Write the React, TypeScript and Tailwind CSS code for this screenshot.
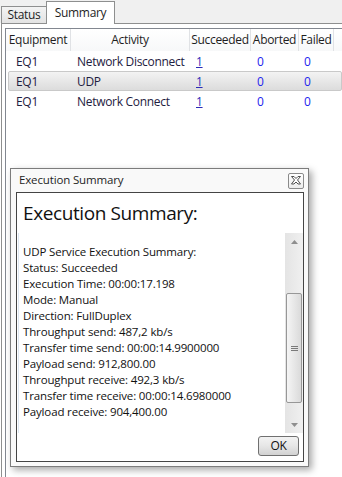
import React from "react";

const rows = [
  { eq: "EQ1", act: "Network Disconnect", sel: false },
  { eq: "EQ1", act: "UDP", sel: true },
  { eq: "EQ1", act: "Network Connect", sel: false },
];

const lines = [
  "UDP Service Execution Summary:",
  "Status: Succeeded",
  "Execution Time: 00:00:17.198",
  "Mode: Manual",
  "Direction: FullDuplex",
  "Throughput send: 487,2 kb/s",
  "Transfer time send: 00:00:14.9900000",
  "Payload send: 912,800.00",
  "Throughput receive: 492,3 kb/s",
  "Transfer time receive: 00:00:14.6980000",
  "Payload receive: 904,400.00",
];

export default function App() {
  return (
    <div className="relative h-[477px] w-[342px] overflow-hidden bg-white font-['Open_Sans',sans-serif] text-[12px] leading-[16px] tracking-[-0.3px] text-[#1e1e1e]">
      {/* Tab strip */}
      <div className="flex h-[23px] items-end bg-[#f0f0f0]">
        <div className="ml-[1px] flex h-[17px] w-[45px] items-center justify-center border-l border-t border-[#8e8f8f] bg-gradient-to-b from-[#f3f3f3] to-[#e3e3e3]">
          Status
        </div>
        <div className="relative z-10 -mb-px flex h-[23px] w-[69px] items-center justify-center border-x border-t border-[#8e8f8f] bg-white pb-[1px]">
          Summary
        </div>
      </div>

      {/* Tab content */}
      <div className="ml-[1px] h-[454px] border-l border-t border-[#8e8f8f] bg-white pl-[3px] pt-[4px]">
        <div className="h-full border-l border-t border-[#828790]">
          {/* header */}
          <div className="flex h-[22px] items-center bg-gradient-to-b from-white to-[#f7f8f9]">
            <div className="flex h-full w-[65px] items-center justify-center border-r border-[#e0e2e5]">Equipment</div>
            <div className="flex h-full w-[119px] items-center justify-center border-r border-[#e0e2e5]">Activity</div>
            <div className="flex h-full w-[61px] items-center justify-center border-r border-[#e0e2e5]">Succeeded</div>
            <div className="flex h-full w-[48px] items-center justify-center border-r border-[#e0e2e5]">Aborted</div>
            <div className="flex h-full w-[35px] items-center justify-center border-r border-[#e0e2e5]">Failed</div>
          </div>
          {/* rows */}
          <div className="flex flex-col">
            {rows.map((r, i) => (
              <div
                key={i}
                className={
                  r.sel
                    ? "ml-[2px] flex h-[20px] items-center rounded-[2px] border border-[#c9c9c9] bg-gradient-to-b from-[#f3f3f3] to-[#dcdcdc] pt-[1px] text-[#1e2040]"
                    : "ml-[2px] flex h-[20px] items-center border border-transparent pt-[1px] text-[#1e2040]"
                }
              >
                <div className="w-[62px] pl-[7px]">{r.eq}</div>
                <div className="w-[119px] whitespace-nowrap pl-[6px]">{r.act}</div>
                <div className="w-[61px] pl-[6px]">
                  <span className="text-[#2b2bb8] underline decoration-[#2b2bb8]">1</span>
                </div>
                <div className="w-[48px] pl-[6px] text-[#2424ee]">0</div>
                <div className="w-[35px] pl-[5px] text-[#2424ee]">0</div>
              </div>
            ))}
          </div>
        </div>
      </div>

      {/* Dialog window */}
      <div className="absolute left-[10px] top-[168px] flex h-[299px] w-[299px] flex-col border border-[#7c7c7c] bg-[#f9f9f9] shadow-[3px_3px_7px_rgba(0,0,0,0.35)]">
        <div className="flex h-[23px] items-center justify-between pl-[8px] pr-[4px]">
          <span className="pb-[1px] text-[11.5px] tracking-[-0.15px]">Execution Summary</span>
          <div className="flex h-[16px] w-[16px] items-center justify-center rounded-[2px] border border-[#8a8a8a] bg-gradient-to-b from-white to-[#ececec]">
            <svg width="12" height="11" viewBox="0 0 12 11">
              <polygon
                points="1.5,1.5 4,1.5 6,3.5 8,1.5 10.5,1.5 7.5,5 10.5,9 8,9 6,7 4,9 1.5,9 4.5,5"
                fill="#ffffff"
                stroke="#505050"
                strokeWidth="1"
                strokeLinejoin="miter"
              />
            </svg>
          </div>
        </div>
        <div className="ml-[5px] mr-[4px] flex h-[270px] w-[288px] flex-col border border-[#444444] bg-white">
          <div className="mt-[7px] h-[26px] pl-[6px] text-[19px] leading-[26px] tracking-[-0.4px] text-[#111]">Execution Summary:</div>
          <div className="ml-[1px] mt-[7px] flex h-[200px] border-l border-[#dde7f2]">
            <div className="flex-1 pl-[4px] pt-[11px] text-[11.5px] tracking-[-0.15px] text-[#111]">
              {lines.map((l, i) => (
                <div key={i} className="h-[16px] whitespace-nowrap">{l}</div>
              ))}
            </div>
            <div className="flex w-[18px] flex-col bg-gradient-to-r from-[#e4e4e4] to-[#f0f0f0]">
              <div className="flex h-[17px] items-center justify-center">
                <svg width="7" height="4" viewBox="0 0 7 4">
                  <polygon points="3.5,0 7,4 0,4" fill="#8e8e8e" />
                </svg>
              </div>
              <div className="h-[43px]" />
              <div className="mx-[1px] flex h-[110px] items-center justify-center rounded-[2px] border border-[#979797] bg-gradient-to-r from-[#f5f5f5] to-[#dadada]">
                <div className="flex flex-col gap-[1px]">
                  <div className="h-px w-[7px] bg-[#7a7a7a]" />
                  <div className="h-px w-[7px] bg-[#7a7a7a]" />
                  <div className="h-px w-[7px] bg-[#7a7a7a]" />
                </div>
              </div>
              <div className="flex-1" />
              <div className="flex h-[17px] items-center justify-center">
                <svg width="7" height="4" viewBox="0 0 7 4">
                  <polygon points="0,0 7,0 3.5,4" fill="#8e8e8e" />
                </svg>
              </div>
            </div>
          </div>
          <div className="mt-[3px] flex justify-end pr-[4px]">
            <div className="flex h-[20px] w-[41px] items-center justify-center rounded-[3px] border border-[#707070] bg-gradient-to-b from-[#f3f3f3] via-[#e6e6e6] to-[#d2d2d2] text-[#111]">
              OK
            </div>
          </div>
        </div>
      </div>
    </div>
  );
}
